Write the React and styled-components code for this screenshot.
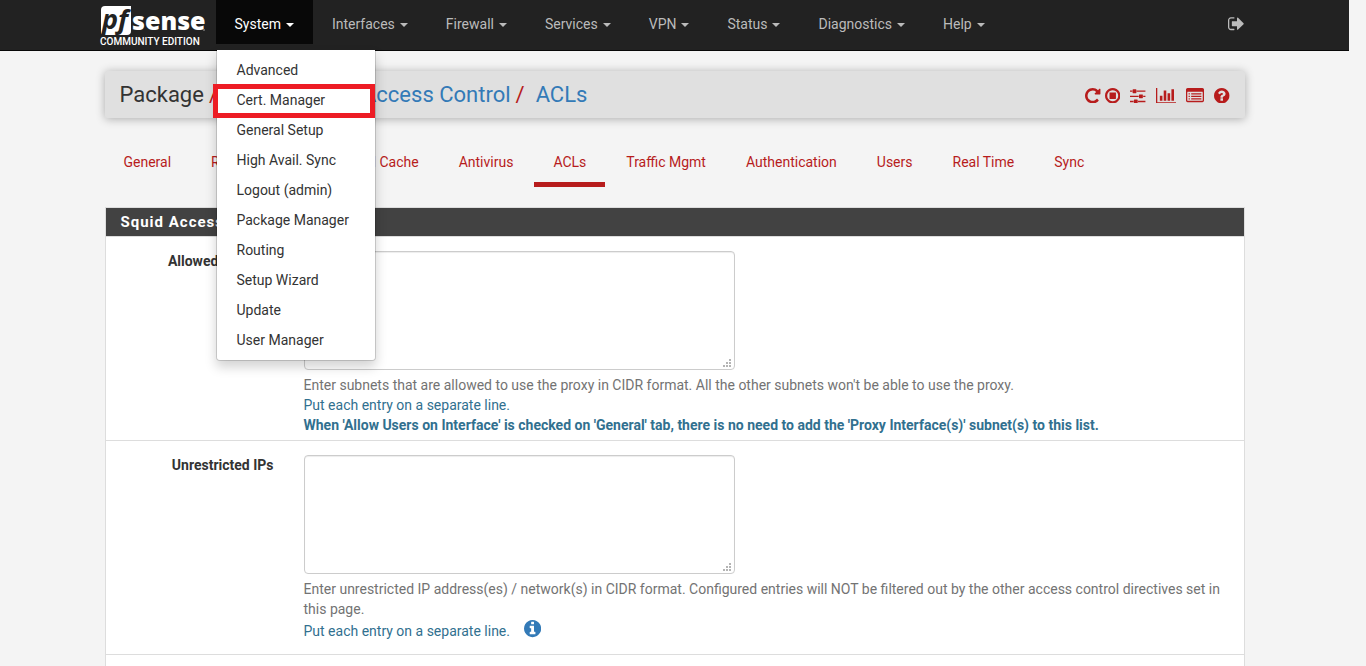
import React from "react";
import styled, { createGlobalStyle, css } from "styled-components";

const GlobalStyle = createGlobalStyle`
  *, *::before, *::after { box-sizing: border-box; }
  body {
    margin: 0;
    padding-right: 17px;
    background: #f4f4f4;
    color: #333;
    font-family: Roboto, "Liberation Sans", sans-serif;
    font-size: 14px;
    line-height: 20px;
  }
  a { color: inherit; text-decoration: none; }
  ul { list-style: none; margin: 0; padding: 0; }
`;

const Container = styled.div`
  max-width: 1140px;
  margin: 0 auto;
`;

const NavBar = styled.nav`
  height: 51px;
  background: #222;
  border-bottom: 1px solid #080808;
`;

const NavInner = styled(Container)`
  display: flex;
  align-items: flex-start;
`;

const Brand = styled.a`
  display: block;
  margin-left: -6px;
  width: 117px;
  height: 50px;
`;

const Menu = styled.ul`
  display: flex;
  flex: 1;
`;

const MenuItem = styled.li`
  position: relative;
`;

const MenuButton = styled.button`
  display: flex;
  align-items: center;
  gap: 5px;
  height: 44px;
  padding: 4px 19px 0;
  border: 0;
  font: inherit;
  background: ${(p) => (p.$open ? "#080808" : "transparent")};
  color: ${(p) => (p.$open ? "#fff" : "#bbb")};

  &::after {
    content: "";
    margin-top: 2px;
    border-top: 4px solid currentColor;
    border-left: 4px solid transparent;
    border-right: 4px solid transparent;
  }
`;

const LogoutLink = styled.a`
  display: flex;
  padding: 16px 0 0;
  color: #bbb;
`;

const Dropdown = styled.ul`
  position: absolute;
  z-index: 10;
  top: 50px;
  left: 0;
  width: 160px;
  padding: 5px 0;
  background: #fff;
  background-clip: padding-box;
  border: 1px solid rgba(0, 0, 0, 0.15);
  border-top: 0;
  border-radius: 0 0 4px 4px;
  box-shadow: 0 6px 12px rgba(0, 0, 0, 0.175);
`;

const DropdownItem = styled.li`
  position: relative;
  ${(p) =>
    p.$marked &&
    css`
      &::after {
        content: "";
        position: absolute;
        inset: -1px 0 -3px -4px;
        border: 5px solid #ed1c24;
        pointer-events: none;
      }
    `}
`;

const DropdownLink = styled.a`
  display: block;
  padding: 5px 20px;
  white-space: nowrap;
`;

const PageHeader = styled.header`
  display: flex;
  align-items: center;
  justify-content: space-between;
  height: 47px;
  margin-top: 20px;
  padding: 0 15px;
  background: #e0e0e0;
  border-radius: 2px;
  box-shadow: 0 1px 10px rgba(0, 0, 0, 0.3);
`;

const Breadcrumb = styled.ol`
  display: flex;
  gap: 5px;
  margin: 0;
  padding: 0;
  list-style: none;
  font-size: 22px;
  line-height: 24px;
`;

const Crumb = styled.li`
  color: ${(p) => (p.$link ? "#337ab7" : "#333")};

  &:not(:first-child)::before {
    content: "/";
    margin-right: 11px;
    color: #b71c1c;
  }
`;

const Actions = styled.div`
  display: flex;
  align-items: center;
  gap: 10px;
  padding-top: 2px;
  color: #b71c1c;
`;

const ActionPair = styled.div`
  display: flex;
  gap: 4px;
`;

const ActionLink = styled.a`
  display: flex;
`;

const Tabs = styled.ul`
  display: flex;
  gap: 2px;
  margin: 25px 0 20px;
`;

const Tab = styled.a`
  display: block;
  padding: 9px 19px 10px;
  color: #b71c1c;
  border-bottom: 5px solid ${(p) => (p.$active ? "#b71c1c" : "transparent")};
`;

const Panel = styled.section`
  background: #fff;
  border: 1px solid #ddd;
`;

const PanelTitle = styled.h2`
  margin: 0;
  padding: 4px 15px;
  background: #424242;
  background-clip: padding-box;
  border-bottom: 1px solid #ddd;
  color: #fff;
  font-size: 15px;
  line-height: 20px;
  font-weight: 700;
  letter-spacing: 1px;
`;

const FormRow = styled.div`
  display: flex;
  gap: 30px;
  padding: 14px 15px ${(p) => (p.$roomy ? "11px" : "5px")} 0;
  border-bottom: 1px solid #ddd;
`;

const FieldLabel = styled.label`
  flex: 0 0 168px;
  text-align: right;
  font-weight: 700;
`;

const Field = styled.div`
  flex: 1;
  min-width: 0;
`;

const AreaWrap = styled.div`
  position: relative;
  max-width: 431px;
  height: 119px;
`;

const Area = styled.textarea`
  display: block;
  width: 100%;
  height: 100%;
  padding: 6px 12px;
  border: 1px solid #ccc;
  border-radius: 4px;
  background: #fff;
  box-shadow: inset 0 1px 1px rgba(0, 0, 0, 0.075);
  font: inherit;
  resize: none;
`;

const Grip = styled.svg`
  position: absolute;
  right: 4px;
  bottom: 3px;
  fill: #b4b4b4;
`;

const Help = styled.p`
  margin: 5px 0 0;
  color: #737373;
`;

const HelpNote = styled.span`
  display: flex;
  align-items: center;
  gap: 14px;
  color: #31708f;
  font-weight: ${(p) => (p.$strong ? 700 : 400)};
`;

const InfoButton = styled.button`
  display: flex;
  align-items: center;
  height: 24px;
  padding: 0 0 4px;
  border: 0;
  background: none;
  color: #337ab7;
`;

const DISC =
  "M1536 640q0 -209 -103 -385.5t-279.5 -279.5t-385.5 -103t-385.5 103t-279.5 279.5t-103 385.5t103 385.5t279.5 279.5t385.5 103t385.5 -103t279.5 -279.5t103 -385.5z";

const bullet = (y) =>
  `M384 ${y}v-64q0 -13 -9.5 -22.5t-22.5 -9.5h-64q-13 0 -22.5 9.5t-9.5 22.5v64q0 13 9.5 22.5t22.5 9.5h64q13 0 22.5 -9.5t9.5 -22.5z` +
  `M1536 ${y}v-64q0 -13 -9.5 -22.5t-22.5 -9.5h-960q-13 0 -22.5 9.5t-9.5 22.5v64q0 13 9.5 22.5t22.5 9.5h960q13 0 22.5 -9.5t9.5 -22.5z`;

const ICONS = {
  repeat: [1536, "M1536 1280v-448q0 -26 -19 -45t-45 -19h-448q-42 0 -59 40q-17 39 14 69l138 138q-148 137 -349 137q-104 0 -198.5 -40.5t-163.5 -109.5t-109.5 -163.5t-40.5 -198.5t40.5 -198.5t109.5 -163.5t163.5 -109.5t198.5 -40.5q119 0 225 52t179 147q7 10 23 12q15 0 25 -9l137 -138q9 -8 9.5 -20.5t-7.5 -22.5q-109 -132 -264 -204.5t-327 -72.5q-156 0 -298 61t-245 164t-164 245t-61 298t61 298t164 245t245 164t298 61q147 0 284.5 -55.5t244.5 -156.5l130 129q29 31 70 14q39 -17 39 -59z"],
  stop: [1536, DISC + "M768 1184q-148 0 -273 -73t-198 -198t-73 -273t73 -273t198 -198t273 -73t273 73t198 198t73 273t-73 273t-198 198t-273 73zM480 960h576q14 0 23 -9t9 -23v-576q0 -14 -9 -23t-23 -9h-576q-14 0 -23 9t-9 23v576q0 14 9 23t23 9z"],
  sliders: [1536, "M352 128v-128h-352v128h352zM704 256q26 0 45 -19t19 -45v-256q0 -26 -19 -45t-45 -19h-256q-26 0 -45 19t-19 45v256q0 26 19 45t45 19h256zM864 640v-128h-864v128h864zM224 1152v-128h-224v128h224zM1536 128v-128h-736v128h736zM576 1280q26 0 45 -19t19 -45v-256q0 -26 -19 -45t-45 -19h-256q-26 0 -45 19t-19 45v256q0 26 19 45t45 19h256zM1216 768q26 0 45 -19t19 -45v-256q0 -26 -19 -45t-45 -19h-256q-26 0 -45 19t-19 45v256q0 26 19 45t45 19h256zM1536 640v-128h-224v128h224zM1536 1152v-128h-864v128h864z"],
  chart: [2048, "M640 640v-512h-256v512h256zM1024 1152v-1024h-256v1024h256zM2048 0v-128h-2048v1536h128v-1408h1920zM1408 896v-768h-256v768h256zM1792 1280v-1152h-256v1152h256z"],
  list: [1792, bullet(352) + bullet(608) + bullet(864) + "M1664 160v832q0 13 -9.5 22.5t-22.5 9.5h-1472q-13 0 -22.5 -9.5t-9.5 -22.5v-832q0 -13 9.5 -22.5t22.5 -9.5h1472q13 0 22.5 9.5t9.5 22.5zM1792 1248v-1088q0 -66 -47 -113t-113 -47h-1472q-66 0 -113 47t-47 113v1088q0 66 47 113t113 47h1472q66 0 113 -47t47 -113z"],
  question: [1536, "M896 160v192q0 14 -9 23t-23 9h-192q-14 0 -23 -9t-9 -23v-192q0 -14 9 -23t23 -9h192q14 0 23 9t9 23zM1152 832q0 88 -55.5 163t-138.5 116t-170 41q-243 0 -371 -213q-15 -24 8 -42l132 -100q7 -6 19 -6q16 0 25 12q53 68 86 92q34 24 86 24q48 0 85.5 -26t37.5 -59q0 -38 -20 -61t-68 -45q-63 -28 -115.5 -86.5t-52.5 -125.5v-36q0 -14 9 -23t23 -9h192q14 0 23 9t9 23q0 19 21.5 49.5t54.5 49.5q32 18 49 28.5t46 35t44.5 48t28 60.5t12.5 81z" + DISC],
  info: [1536, "M1024 160v160q0 14 -9 23t-23 9h-96v512q0 14 -9 23t-23 9h-320q-14 0 -23 -9t-9 -23v-160q0 -14 9 -23t23 -9h96v-320h-96q-14 0 -23 -9t-9 -23v-160q0 -14 9 -23t23 -9h448q14 0 23 9t9 23zM896 1056v160q0 14 -9 23t-23 9h-192q-14 0 -23 -9t-9 -23v-160q0 -14 9 -23t23 -9h192q14 0 23 9t9 23z" + DISC],
  signOut: [1664, "M640 96q0 -4 1 -20t0.5 -26.5t-3 -23.5t-10 -19.5t-20.5 -6.5h-320q-119 0 -203.5 84.5t-84.5 203.5v704q0 119 84.5 203.5t203.5 84.5h320q13 0 22.5 -9.5t9.5 -22.5q0 -4 1 -20t0.5 -26.5t-3 -23.5t-10 -19.5t-20.5 -6.5h-320q-66 0 -113 -47t-47 -113v-704q0 -66 47 -113t113 -47h288h11h13t11.5 -1t11.5 -3t8 -5.5t7 -9t2 -13.5zM1568 640q0 -26 -19 -45l-544 -544q-19 -19 -45 -19t-45 19t-19 45v288h-448q-26 0 -45 19t-19 45v384q0 26 19 45t45 19h448v288q0 26 19 45t45 19t45 -19l544 -544q19 -19 19 -45z"],
};

function Icon({ name, size }) {
  const [width, path] = ICONS[name];
  return (
    <svg
      width={(size * width) / 1792}
      height={(size * 1536) / 1792}
      viewBox={`0 0 ${width} 1536`}
      fill="currentColor"
      fillRule="evenodd"
      aria-hidden="true"
    >
      <path transform="translate(0 1408) scale(1 -1)" d={path} />
    </svg>
  );
}

function Logo() {
  return (
    <svg width="110" height="50" viewBox="0 0 110 50" role="img" aria-label="pfSense Community Edition">
      <path d="M6 6h26v25q0 4-4 4H5q-3 0-3-3V10q0-4 4-4z" fill="#fff" />
      <g fontFamily="'Open Sans', sans-serif">
        <text x="3" y="29" fontSize="27" fontWeight="700" fontStyle="italic" fill="#222">pf</text>
        <text x="33" y="30" fontSize="25" fontWeight="800" fill="#fff">sense</text>
      </g>
      <circle cx="105" cy="30" r="1" fill="#777" />
      <text x="1" y="45" fontFamily="Roboto, sans-serif" fontSize="10" fontWeight="500" fill="#fff">COMMUNITY EDITION</text>
    </svg>
  );
}

const MENUS = ["System", "Interfaces", "Firewall", "Services", "VPN", "Status", "Diagnostics", "Help"];
const SYSTEM_ITEMS = [
  "Advanced",
  "Cert. Manager",
  "General Setup",
  "High Avail. Sync",
  "Logout (admin)",
  "Package Manager",
  "Routing",
  "Setup Wizard",
  "Update",
  "User Manager",
];
const TABS = [
  "General",
  "Remote Cache",
  "Local Cache",
  "Antivirus",
  "ACLs",
  "Traffic Mgmt",
  "Authentication",
  "Users",
  "Real Time",
  "Sync",
];

function TextArea({ id }) {
  return (
    <AreaWrap>
      <Area id={id} />
      <Grip width="8" height="8" viewBox="0 0 8 8" aria-hidden="true">
        <path d="M6 0h2v2H6zM3 3h2v2H3zM6 3h2v2H6zM0 6h2v2H0zM3 6h2v2H3zM6 6h2v2H6z" />
      </Grip>
    </AreaWrap>
  );
}

export default function App() {
  return (
    <>
      <GlobalStyle />
      <NavBar>
        <NavInner>
          <Brand href="#"><Logo /></Brand>
          <Menu>
            {MENUS.map((name) => (
              <MenuItem key={name}>
                <MenuButton type="button" $open={name === "System"}>{name}</MenuButton>
                {name === "System" && (
                  <Dropdown>
                    {SYSTEM_ITEMS.map((item) => (
                      <DropdownItem key={item} $marked={item === "Cert. Manager"}>
                        <DropdownLink href="#">{item}</DropdownLink>
                      </DropdownItem>
                    ))}
                  </Dropdown>
                )}
              </MenuItem>
            ))}
          </Menu>
          <LogoutLink href="#" aria-label="Logout"><Icon name="signOut" size={18} /></LogoutLink>
        </NavInner>
      </NavBar>

      <Container>
        <PageHeader>
          <Breadcrumb>
            <Crumb>Package</Crumb>
            <Crumb $link><a href="#">Proxy Server: Access Control</a></Crumb>
            <Crumb $link><a href="#">ACLs</a></Crumb>
          </Breadcrumb>
          <Actions>
            <ActionPair>
              <ActionLink href="#" aria-label="Restart service"><Icon name="repeat" size={18} /></ActionLink>
              <ActionLink href="#" aria-label="Stop service"><Icon name="stop" size={18} /></ActionLink>
            </ActionPair>
            <ActionLink href="#" aria-label="Settings"><Icon name="sliders" size={18} /></ActionLink>
            <ActionLink href="#" aria-label="Status"><Icon name="chart" size={18} /></ActionLink>
            <ActionLink href="#" aria-label="Logs"><Icon name="list" size={18} /></ActionLink>
            <ActionLink href="#" aria-label="Help"><Icon name="question" size={18} /></ActionLink>
          </Actions>
        </PageHeader>

        <Tabs>
          {TABS.map((tab) => (
            <li key={tab}><Tab href="#" $active={tab === "ACLs"}>{tab}</Tab></li>
          ))}
        </Tabs>

        <Panel>
          <PanelTitle>Squid Access Control Lists</PanelTitle>
          <FormRow>
            <FieldLabel htmlFor="allowed">Allowed Subnets</FieldLabel>
            <Field>
              <TextArea id="allowed" />
              <Help>
                Enter subnets that are allowed to use the proxy in CIDR format. All the other subnets won't be able to use the proxy.
                <HelpNote>Put each entry on a separate line.</HelpNote>
                <HelpNote $strong>
                  When 'Allow Users on Interface' is checked on 'General' tab, there is no need to add the 'Proxy Interface(s)' subnet(s) to this list.
                </HelpNote>
              </Help>
            </Field>
          </FormRow>
          <FormRow $roomy>
            <FieldLabel htmlFor="unrestricted">Unrestricted IPs</FieldLabel>
            <Field>
              <TextArea id="unrestricted" />
              <Help>
                Enter unrestricted IP address(es) / network(s) in CIDR format. Configured entries will NOT be filtered out by the other access control directives set in this page.
                <HelpNote>
                  Put each entry on a separate line.
                  <InfoButton type="button" aria-label="More information"><Icon name="info" size={20} /></InfoButton>
                </HelpNote>
              </Help>
            </Field>
          </FormRow>
          <FormRow />
        </Panel>
      </Container>
    </>
  );
}
